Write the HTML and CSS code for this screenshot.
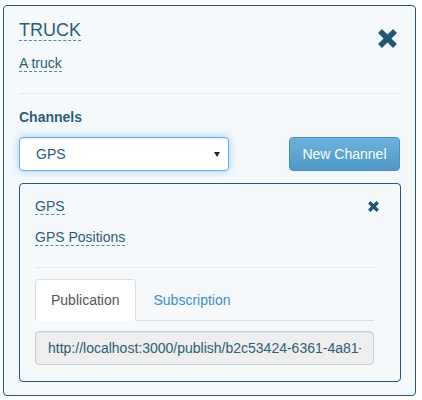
FILE: index.html
```html
<!DOCTYPE html>
<html lang="en">
<head>
<meta charset="utf-8">
<title>Truck</title>
<link rel="stylesheet" href="styles.css">
</head>
<body>
<div class="card">
  <div class="card-head">
    <div class="titles">
      <div class="title"><span class="editable">TRUCK</span></div>
      <div class="desc"><span class="editable">A truck</span></div>
    </div>
    <button class="close close-lg" aria-label="Remove">
      <svg width="19" height="19" viewBox="0 0 19 19"><path d="M2 2L17 17M17 2L2 17" fill="none" stroke="currentColor" stroke-width="5.6"/></svg>
    </button>
  </div>
  <hr class="divider">
  <div class="section-label">Channels</div>
  <div class="channel-bar">
    <div class="select"><span>GPS</span><span class="caret"></span></div>
    <button class="btn-new">New Channel</button>
  </div>
  <div class="channel">
    <div class="channel-head">
      <div class="titles">
        <div><span class="editable">GPS</span></div>
        <div class="channel-desc"><span class="editable">GPS Positions</span></div>
      </div>
      <button class="close close-sm" aria-label="Remove channel">
        <svg width="11" height="11" viewBox="0 0 11 11"><path d="M1.3 1.3L9.7 9.7M9.7 1.3L1.3 9.7" fill="none" stroke="currentColor" stroke-width="3.4"/></svg>
      </button>
    </div>
    <div class="channel-body">
      <hr class="divider divider-inner">
      <ul class="tabs">
        <li class="tab active">Publication</li>
        <li class="tab"><a href="#">Subscription</a></li>
      </ul>
      <input class="url" type="text" readonly value="http://localhost:3000/publish/b2c53424-6361-4a81-9f2e-7c1d2a4b5e60">
    </div>
  </div>
</div>
</body>
</html>
```
FILE: styles.css
```css
body {
  margin: 0;
  background: #fff;
  font-family: "Liberation Sans", Arial, sans-serif;
  font-size: 14px;
  line-height: 20px;
  color: #2c5d77;
}

.card {
  box-sizing: border-box;
  width: 413px;
  margin: 5px 0 0 3px;
  padding: 14px 14px 13px 15px;
  border: 1px solid #245b74;
  border-radius: 4px;
  background: #f5f9fc;
}

.card-head,
.channel-head {
  display: flex;
  justify-content: space-between;
  align-items: flex-start;
}

.title {
  font-size: 18px;
  line-height: 20px;
}

.desc {
  margin-top: 13px;
}

.editable {
  border-bottom: 1px dashed #428bca;
}

.close {
  display: block;
  padding: 0;
  border: 0;
  background: none;
  color: #1f5670;
  line-height: 0;
}

.close-lg {
  margin: 9px 4px 0 0;
}

.close-sm {
  margin: 5px 6px 0 0;
}

.divider {
  height: 0;
  margin: 20px 0 13px;
  border: 0;
  border-top: 1px solid #e4e9ed;
}

.section-label {
  font-weight: bold;
}

.channel-bar {
  display: flex;
  justify-content: space-between;
  margin-top: 10px;
}

.select {
  box-sizing: border-box;
  width: 210px;
  height: 34px;
  display: flex;
  align-items: center;
  justify-content: space-between;
  padding: 0 8px 0 16px;
  border: 1px solid #66afe9;
  border-radius: 4px;
  background: #fff;
  box-shadow: inset 0 1px 1px rgba(0, 0, 0, 0.075), 0 0 8px rgba(102, 175, 233, 0.6);
}

.caret {
  width: 0;
  height: 0;
  border-left: 3px solid transparent;
  border-right: 3px solid transparent;
  border-top: 5px solid #222;
}

.btn-new {
  box-sizing: border-box;
  width: 111px;
  height: 34px;
  margin-right: 1px;
  padding: 0;
  border: 1px solid #4a8ebb;
  border-radius: 4px;
  background: linear-gradient(#6db1da, #4e9ac9);
  color: #fff;
  font-family: inherit;
  font-size: 14px;
  line-height: 20px;
}

.channel {
  margin-top: 12px;
  padding: 12px 15px 16px 15px;
  border: 1px solid #245b74;
  border-radius: 4px;
  background: #f5f9fc;
}

.channel-desc {
  margin-top: 11px;
}

.channel-body {
  margin-right: 11px;
}

.divider-inner {
  margin: 20px 0 11px;
}

.tabs {
  display: flex;
  margin: 0;
  padding: 0;
  list-style: none;
  border-bottom: 1px solid #ddd;
}

.tab {
  margin: 0 2px -1px 0;
  padding: 10px 15px;
  border: 1px solid transparent;
  border-radius: 4px 4px 0 0;
}

.tab.active {
  background: #fff;
  border-color: #ddd #ddd transparent;
  color: #555;
}

.tab a {
  color: #428bca;
  text-decoration: none;
}

.url {
  display: block;
  box-sizing: border-box;
  width: 100%;
  height: 34px;
  margin-top: 10px;
  padding: 6px 12px;
  border: 1px solid #ccc;
  border-radius: 4px;
  background: #eee;
  box-shadow: inset 0 1px 1px rgba(0, 0, 0, 0.075);
  color: #2c5d77;
  font-family: inherit;
  font-size: 14px;
  line-height: 20px;
}
```
